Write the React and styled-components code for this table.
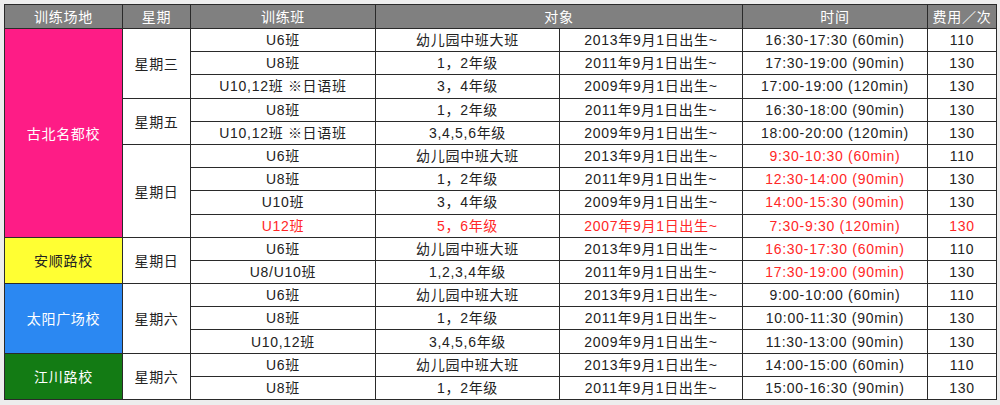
import React from "react";
import styled, { createGlobalStyle } from "styled-components";

const GlobalStyle = createGlobalStyle`
  html, body {
    margin: 0;
    padding: 0;
    background: #ededed;
  }
  body {
    font-family: "Liberation Sans", "Noto Sans CJK SC", sans-serif;
  }
`;

const Page = styled.div`
  padding: 4px 4px 0 4px;
`;

const Table = styled.table`
  width: 992px;
  border-collapse: collapse;
  table-layout: fixed;
  background: #fff;
  font-size: 14px;
  letter-spacing: 0.7px;
  color: #222;
  border: 1px solid #2a2a2a;
`;

const Col = styled.col`
  width: ${(p) => p.$w}px;
`;

const HeadRow = styled.tr`
  height: 24px;
`;

const Row = styled.tr`
  height: 23.2px;
`;

const HeadCell = styled.th`
  background: #808080;
  color: #fff;
  font-weight: normal;
  text-align: center;
  padding: 0;
  border: 1px solid #2a2a2a;
  line-height: 16px;
`;

const SiteCell = styled.td`
  background: ${(p) => p.$bg};
  color: ${(p) => p.$fg};
  text-align: center;
  vertical-align: middle;
  padding: 0;
  border: 1px solid #2a2a2a;
`;

const DayCell = styled.td`
  text-align: center;
  vertical-align: middle;
  padding: 0;
  border: 1px solid #2a2a2a;
`;

const Cell = styled.td`
  text-align: center;
  vertical-align: middle;
  padding: 0;
  line-height: 16px;
  white-space: nowrap;
  border: 1px solid #2a2a2a;
  color: ${(p) => (p.$red ? "#ff2727" : "#222")};
`;

const widths = [118, 68, 185, 184, 183, 185, 69];

const sites = [
  {
    name: "古北名都校",
    bg: "#fe1c86",
    fg: "#fff",
    days: [
      {
        day: "星期三",
        rows: [
          ["U6班", "幼儿园中班大班", "2013年9月1日出生~", "16:30-17:30 (60min)", "110"],
          ["U8班", "1，2年级", "2011年9月1日出生~", "17:30-19:00 (90min)", "130"],
          ["U10,12班 ※日语班", "3，4年级", "2009年9月1日出生~", "17:00-19:00 (120min)", "130"],
        ],
      },
      {
        day: "星期五",
        rows: [
          ["U8班", "1，2年级", "2011年9月1日出生~", "16:30-18:00 (90min)", "130"],
          ["U10,12班 ※日语班", "3,4,5,6年级", "2009年9月1日出生~", "18:00-20:00 (120min)", "130"],
        ],
      },
      {
        day: "星期日",
        rows: [
          ["U6班", "幼儿园中班大班", "2013年9月1日出生~", "9:30-10:30 (60min)", "110", [3]],
          ["U8班", "1，2年级", "2011年9月1日出生~", "12:30-14:00 (90min)", "130", [3]],
          ["U10班", "3，4年级", "2009年9月1日出生~", "14:00-15:30 (90min)", "130", [3]],
          ["U12班", "5，6年级", "2007年9月1日出生~", "7:30-9:30 (120min)", "130", [0, 1, 2, 3, 4]],
        ],
      },
    ],
  },
  {
    name: "安顺路校",
    bg: "#ffff33",
    fg: "#222",
    days: [
      {
        day: "星期日",
        rows: [
          ["U6班", "幼儿园中班大班", "2013年9月1日出生~", "16:30-17:30 (60min)", "110", [3]],
          ["U8/U10班", "1,2,3,4年级", "2011年9月1日出生~", "17:30-19:00 (90min)", "130", [3]],
        ],
      },
    ],
  },
  {
    name: "太阳广场校",
    bg: "#2b88f2",
    fg: "#fff",
    days: [
      {
        day: "星期六",
        rows: [
          ["U6班", "幼儿园中班大班", "2013年9月1日出生~", "9:00-10:00 (60min)", "110"],
          ["U8班", "1，2年级", "2011年9月1日出生~", "10:00-11:30 (90min)", "130"],
          ["U10,12班", "3,4,5,6年级", "2009年9月1日出生~", "11:30-13:00 (90min)", "130"],
        ],
      },
    ],
  },
  {
    name: "江川路校",
    bg: "#137b14",
    fg: "#fff",
    days: [
      {
        day: "星期六",
        rows: [
          ["U6班", "幼儿园中班大班", "2013年9月1日出生~", "14:00-15:00 (60min)", "110"],
          ["U8班", "1，2年级", "2011年9月1日出生~", "15:00-16:30 (90min)", "130"],
        ],
      },
    ],
  },
];

export default function App() {
  const body = [];
  sites.forEach((site) => {
    const siteSpan = site.days.reduce((n, d) => n + d.rows.length, 0);
    site.days.forEach((d, di) => {
      d.rows.forEach((r, ri) => {
        const red = r[5] || [];
        body.push(
          <Row key={`${site.name}-${di}-${ri}`}>
            {di === 0 && ri === 0 && (
              <SiteCell rowSpan={siteSpan} $bg={site.bg} $fg={site.fg}>
                {site.name}
              </SiteCell>
            )}
            {ri === 0 && <DayCell rowSpan={d.rows.length}>{d.day}</DayCell>}
            {r.slice(0, 5).map((v, ci) => (
              <Cell key={ci} $red={red.includes(ci)}>
                {v}
              </Cell>
            ))}
          </Row>
        );
      });
    });
  });

  return (
    <Page>
      <GlobalStyle />
      <Table>
        <colgroup>
          {widths.map((w, i) => (
            <Col key={i} $w={w} />
          ))}
        </colgroup>
        <thead>
          <HeadRow>
            <HeadCell>训练场地</HeadCell>
            <HeadCell>星期</HeadCell>
            <HeadCell>训练班</HeadCell>
            <HeadCell colSpan={2}>对象</HeadCell>
            <HeadCell>时间</HeadCell>
            <HeadCell>费用／次</HeadCell>
          </HeadRow>
        </thead>
        <tbody>{body}</tbody>
      </Table>
    </Page>
  );
}
